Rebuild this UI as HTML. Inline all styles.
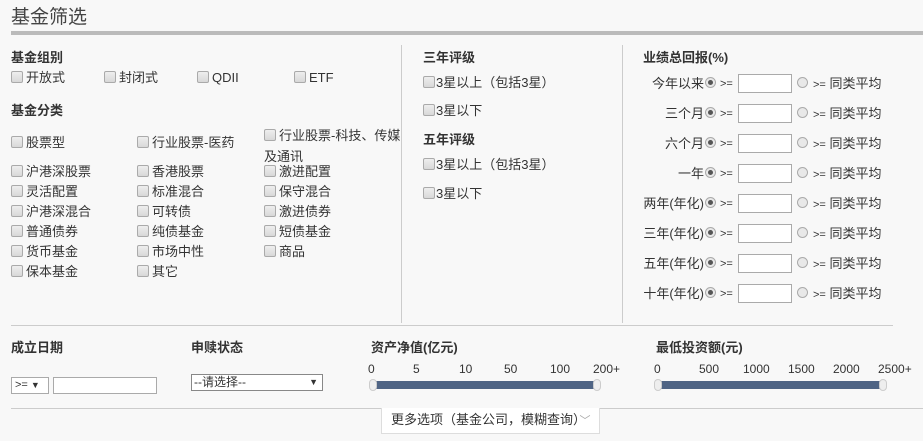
<!DOCTYPE html>
<html><head><meta charset="utf-8"><style>
*{margin:0;padding:0;box-sizing:border-box}
body{width:923px;height:441px;background:#f8f8f8;font-family:"Liberation Sans","Noto Sans CJK SC",sans-serif;font-size:13px;color:#333;position:relative;overflow:hidden}
.a{position:absolute;white-space:nowrap;line-height:16px}
.h{font-weight:bold;color:#333;font-size:13px}
.cb{display:inline-block;width:12px;height:12px;border:1px solid #aaa;border-radius:2px;background:linear-gradient(#eee,#d8d8d8);vertical-align:-1px;margin-right:3px}
.rd{display:inline-block;width:11px;height:11px;border:1px solid #aaa;border-radius:50%;background:#e8e8e8;vertical-align:-1px;position:relative}
.rd.on::after{content:"";position:absolute;left:2px;top:2px;width:5px;height:5px;border-radius:50%;background:#555}
.in{position:absolute;width:54px;height:19px;border:1px solid #aaa;background:#fff}
.sm{font-size:11px}
.vl{position:absolute;width:1px;background:#ccc}
.bar{position:absolute;height:8px;background:#4f6484}
.kn{position:absolute;width:8px;height:12px;border:1px solid #ccc;border-radius:4px;background:#eee}
.tk{position:absolute;font-size:12px;color:#333;line-height:14px}
</style></head><body>
<div class="a" style="left:11px;top:6px;font-size:19px;line-height:24px;color:#444">基金筛选</div>
<div style="position:absolute;left:11px;top:31px;width:912px;height:4px;background:#bbb"></div>

<div class="a h" style="left:11px;top:50px">基金组别</div>
<div class="a" style="left:11px;top:70px"><span class="cb"></span>开放式</div>
<div class="a" style="left:104px;top:70px"><span class="cb"></span>封闭式</div>
<div class="a" style="left:197px;top:70px"><span class="cb"></span>QDII</div>
<div class="a" style="left:294px;top:70px"><span class="cb"></span>ETF</div>
<div class="a h" style="left:11px;top:103px">基金分类</div>
<div class="a" style="left:11px;top:135px"><span class="cb"></span>股票型</div>
<div class="a" style="left:137px;top:135px"><span class="cb"></span>行业股票-医药</div>
<div class="a" style="left:264px;top:125px;line-height:21px"><span class="cb"></span>行业股票-科技、传媒<br>及通讯</div>
<div class="a" style="left:11px;top:164px"><span class="cb"></span>沪港深股票</div>
<div class="a" style="left:137px;top:164px"><span class="cb"></span>香港股票</div>
<div class="a" style="left:264px;top:164px"><span class="cb"></span>激进配置</div>
<div class="a" style="left:11px;top:184px"><span class="cb"></span>灵活配置</div>
<div class="a" style="left:137px;top:184px"><span class="cb"></span>标准混合</div>
<div class="a" style="left:264px;top:184px"><span class="cb"></span>保守混合</div>
<div class="a" style="left:11px;top:204px"><span class="cb"></span>沪港深混合</div>
<div class="a" style="left:137px;top:204px"><span class="cb"></span>可转债</div>
<div class="a" style="left:264px;top:204px"><span class="cb"></span>激进债券</div>
<div class="a" style="left:11px;top:224px"><span class="cb"></span>普通债券</div>
<div class="a" style="left:137px;top:224px"><span class="cb"></span>纯债基金</div>
<div class="a" style="left:264px;top:224px"><span class="cb"></span>短债基金</div>
<div class="a" style="left:11px;top:244px"><span class="cb"></span>货币基金</div>
<div class="a" style="left:137px;top:244px"><span class="cb"></span>市场中性</div>
<div class="a" style="left:264px;top:244px"><span class="cb"></span>商品</div>
<div class="a" style="left:11px;top:264px"><span class="cb"></span>保本基金</div>
<div class="a" style="left:137px;top:264px"><span class="cb"></span>其它</div>

<div class="vl" style="left:401px;top:45px;height:278px"></div>
<div class="vl" style="left:622px;top:45px;height:278px"></div>

<div class="a h" style="left:423px;top:50px">三年评级</div>
<div class="a" style="left:423px;top:75px"><span class="cb" style="margin-right:1px"></span>3星以上（包括3星）</div>
<div class="a" style="left:423px;top:103px"><span class="cb" style="margin-right:1px"></span>3星以下</div>
<div class="a h" style="left:423px;top:132px">五年评级</div>
<div class="a" style="left:423px;top:157px"><span class="cb" style="margin-right:1px"></span>3星以上（包括3星）</div>
<div class="a" style="left:423px;top:186px"><span class="cb" style="margin-right:1px"></span>3星以下</div>

<div class="a h" style="left:643px;top:50px">业绩总回报(%)</div>
<div id="rows"></div>
<script>
var L=["今年以来","三个月","六个月","一年","两年(年化)","三年(年化)","五年(年化)","十年(年化)"],h="";
for(var i=0;i<8;i++){var y=76+i*30;
h+='<div class="a" style="right:219px;top:'+y+'px">'+L[i]+'</div>'+
'<span class="rd on" style="position:absolute;left:705px;top:'+(y+1)+'px"></span>'+
'<div class="a sm" style="left:720px;top:'+y+'px">&gt;=</div>'+
'<div class="in" style="left:738px;top:'+(y-2)+'px"></div>'+
'<span class="rd" style="position:absolute;left:797px;top:'+(y+1)+'px"></span>'+
'<div class="a" style="left:813px;top:'+y+'px"><span class="sm">&gt;=</span> 同类平均</div>';}
document.getElementById("rows").innerHTML=h;
</script>

<div style="position:absolute;left:11px;top:325px;width:882px;height:1px;background:#ccc"></div>

<div class="a h" style="left:11px;top:340px">成立日期</div>
<div style="position:absolute;left:11px;top:377px;width:38px;height:17px;border:1px solid #aaa;background:#fff;font-size:11px;line-height:15px;padding-left:3px">&gt;= <span style="font-size:9px">▼</span></div>
<div style="position:absolute;left:53px;top:377px;width:104px;height:17px;border:1px solid #aaa;background:#fff"></div>
<div class="a h" style="left:191px;top:340px">申赎状态</div>
<div style="position:absolute;left:191px;top:374px;width:132px;height:17px;border:1px solid #888;background:#fff;font-size:12px;line-height:15px;padding-left:2px">--请选择--<span style="position:absolute;right:4px;font-size:9px">▼</span></div>

<div class="a h" style="left:371px;top:340px">资产净值(亿元)</div>
<div class="tk" style="left:368px;top:362px">0</div><div class="tk" style="left:413px;top:362px">5</div><div class="tk" style="left:459px;top:362px">10</div><div class="tk" style="left:504px;top:362px">50</div><div class="tk" style="left:550px;top:362px">100</div><div class="tk" style="left:593px;top:362px">200+</div>
<div class="bar" style="left:375px;top:381px;width:220px"></div>
<div class="kn" style="left:369px;top:379px"></div><div class="kn" style="left:593px;top:379px"></div>

<div class="a h" style="left:656px;top:340px">最低投资额(元)</div>
<div class="tk" style="left:654px;top:362px">0</div><div class="tk" style="left:699px;top:362px">500</div><div class="tk" style="left:743px;top:362px">1000</div><div class="tk" style="left:788px;top:362px">1500</div><div class="tk" style="left:833px;top:362px">2000</div><div class="tk" style="left:878px;top:362px">2500+</div>
<div class="bar" style="left:660px;top:381px;width:222px"></div>
<div class="kn" style="left:654px;top:379px"></div><div class="kn" style="left:879px;top:379px"></div>

<div style="position:absolute;left:11px;top:408px;width:912px;height:1px;background:#ccc"></div>
<div style="position:absolute;left:381px;top:408px;width:219px;height:26px;border:1px solid #ddd;border-top:none;background:#fff;font-size:13px;line-height:24px;padding-left:9px;color:#333">更多选项（基金公司，模糊查询）<span style="color:#aaa;font-size:11px">﹀</span></div>
</body></html>
